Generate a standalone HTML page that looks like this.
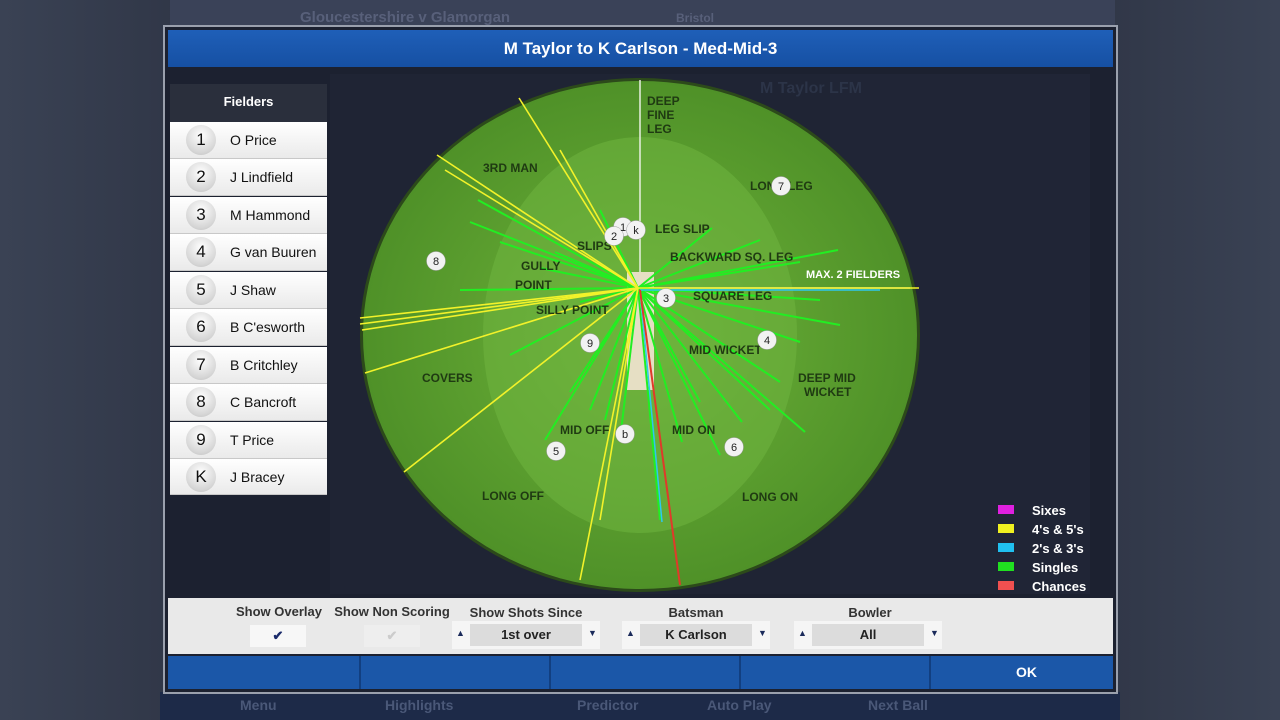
<!DOCTYPE html>
<html><head><meta charset="utf-8"><style>
*{margin:0;padding:0;box-sizing:border-box}
body{width:1280px;height:720px;overflow:hidden;background:linear-gradient(90deg,#3a4254,#2c3242 20%,#2c3242 80%,#3a4254);font-family:"Liberation Sans",sans-serif;position:relative}
.abs{position:absolute}
.topbar{left:170px;top:0;width:945px;height:28px;background:#3a4258}
.bottombar{left:160px;top:692px;width:960px;height:28px;background:#1d2a48;color:#4a5878;font-size:14px;font-weight:bold}
.modal{left:163px;top:25px;width:955px;height:669px;background:#1c2130;border:2px solid #9aa0ad}
.title{left:168px;top:30px;width:945px;height:37px;background:linear-gradient(#1f5fb8,#1650a3);color:#fff;font-size:17px;font-weight:bold;text-align:center;line-height:37px}
.fhead{left:170px;top:84px;width:157px;height:38px;background:#2a2f3c;color:#fff;font-size:13px;font-weight:bold;text-align:center;line-height:36px}
.row{left:170px;width:157px;height:37px;background:linear-gradient(#fff,#eaeaea);border-bottom:1px solid #c8c8c8;font-size:14px;color:#111}
.row .b{position:absolute;left:16px;top:3px;width:30px;height:30px;border-radius:50%;background:radial-gradient(circle at 50% 35%,#fff,#d5d5d5 70%,#bbb);text-align:center;line-height:29px;font-size:17px}
.row .n{position:absolute;left:60px;top:10px}
.ctrl{left:168px;top:598px;width:945px;height:56px;background:#e9e9e9}
.lbl{font-size:13px;font-weight:bold;color:#333;text-align:center}
.box{background:#dcdcdc;height:22px;text-align:center;line-height:22px;font-size:13px;font-weight:bold;color:#222}
.btns{left:168px;top:656px;width:945px;height:33px;background:#1b57a8}
.leg{font-size:13px;font-weight:bold;color:#fff}
</style></head><body>
<div class="abs topbar"></div>
<div class="abs" style="left:300px;top:9px;color:#58607a;font-size:15px;font-weight:bold">Gloucestershire v Glamorgan</div>
<div class="abs" style="left:676px;top:11px;color:#58607a;font-size:12px;font-weight:bold">Bristol</div>
<div class="abs bottombar"><span class="abs" style="left:80px;top:5px">Menu</span><span class="abs" style="left:225px;top:5px">Highlights</span><span class="abs" style="left:417px;top:5px">Predictor</span><span class="abs" style="left:547px;top:5px">Auto Play</span><span class="abs" style="left:708px;top:5px">Next Ball</span></div>
<div class="abs modal"></div>
<div class="abs" style="left:330px;top:74px;width:560px;height:520px;background:#1f2434"></div>
<div class="abs" style="left:830px;top:74px;width:260px;height:520px;background:#202536"></div>
<div class="abs title">M Taylor to K Carlson - Med-Mid-3</div>
<div class="abs" style="left:760px;top:80px;color:#2c3448;font-size:16px;font-weight:bold">M Taylor LFM</div>
<svg class="abs" style="left:0;top:0" width="1280" height="720">
<defs><radialGradient id="g" cx="50%" cy="50%" r="50%"><stop offset="0" stop-color="#6fb43a"/><stop offset="1" stop-color="#4f9128"/></radialGradient></defs>
<ellipse cx="640" cy="335" rx="280" ry="257" fill="#2c4a1a"/>
<ellipse cx="640" cy="335" rx="277" ry="254" fill="url(#g)"/>
<ellipse cx="640" cy="335" rx="157" ry="198" fill="#6fb440" opacity="0.55"/>
<line x1="640" y1="80" x2="640" y2="288" stroke="#e8f0e0" stroke-width="1.5"/>
<line x1="640" y1="288" x2="910" y2="288" stroke="#e8f0e0" stroke-width="1.5"/>
<rect x="627" y="272" width="27" height="118" fill="#e6dfc4"/>
<g stroke="#22ee22" stroke-width="2">
<line x1="638" y1="288" x2="478" y2="200"/><line x1="638" y1="288" x2="470" y2="222"/><line x1="638" y1="288" x2="500" y2="242"/><line x1="638" y1="288" x2="555" y2="252"/><line x1="638" y1="288" x2="540" y2="268"/><line x1="638" y1="288" x2="460" y2="290"/><line x1="638" y1="288" x2="580" y2="302"/><line x1="638" y1="288" x2="600" y2="210"/>
<line x1="638" y1="288" x2="838" y2="250"/><line x1="638" y1="288" x2="800" y2="262"/><line x1="638" y1="288" x2="760" y2="240"/><line x1="638" y1="288" x2="712" y2="228"/><line x1="638" y1="288" x2="820" y2="300"/><line x1="638" y1="288" x2="840" y2="325"/><line x1="638" y1="288" x2="800" y2="342"/><line x1="638" y1="288" x2="780" y2="382"/><line x1="638" y1="288" x2="805" y2="432"/><line x1="638" y1="288" x2="770" y2="410"/><line x1="638" y1="288" x2="742" y2="422"/><line x1="638" y1="288" x2="700" y2="402"/><line x1="638" y1="288" x2="720" y2="455"/><line x1="638" y1="288" x2="682" y2="442"/><line x1="638" y1="288" x2="660" y2="520"/><line x1="638" y1="288" x2="620" y2="440"/><line x1="638" y1="288" x2="605" y2="420"/><line x1="638" y1="288" x2="590" y2="410"/><line x1="638" y1="288" x2="570" y2="392"/><line x1="638" y1="288" x2="545" y2="440"/><line x1="638" y1="288" x2="510" y2="355"/>
</g>
<g stroke="#f2f22a" stroke-width="1.6">
<line x1="638" y1="288" x2="519" y2="98"/><line x1="638" y1="288" x2="437" y2="155"/><line x1="638" y1="288" x2="445" y2="170"/><line x1="638" y1="288" x2="360" y2="318"/><line x1="638" y1="288" x2="360" y2="324"/><line x1="638" y1="288" x2="362" y2="330"/><line x1="638" y1="288" x2="365" y2="373"/><line x1="638" y1="288" x2="404" y2="472"/><line x1="638" y1="288" x2="580" y2="580"/><line x1="638" y1="288" x2="600" y2="520"/><line x1="638" y1="288" x2="560" y2="150"/><line x1="638" y1="288" x2="919" y2="288"/>
</g>
<line x1="640" y1="290" x2="880" y2="290" stroke="#2ec8f0" stroke-width="1.5"/>
<line x1="640" y1="290" x2="662" y2="522" stroke="#2ec8f0" stroke-width="1.5"/>
<line x1="640" y1="290" x2="680" y2="585" stroke="#e03a2a" stroke-width="2"/>
<g font-family="Liberation Sans" font-size="12" font-weight="bold" fill="#1f3a12">
<text x="647" y="105">DEEP</text><text x="647" y="119">FINE</text><text x="647" y="133">LEG</text>
<text x="483" y="172">3RD MAN</text><text x="750" y="190">LONG LEG</text>
<text x="655" y="233">LEG SLIP</text><text x="577" y="250">SLIPS</text><text x="670" y="261">BACKWARD SQ. LEG</text>
<text x="521" y="270">GULLY</text><text x="515" y="289">POINT</text><text x="693" y="300">SQUARE LEG</text>
<text x="536" y="314">SILLY POINT</text><text x="689" y="354">MID WICKET</text>
<text x="422" y="382">COVERS</text><text x="798" y="382">DEEP MID</text><text x="804" y="396">WICKET</text>
<text x="560" y="434">MID OFF</text><text x="672" y="434">MID ON</text>
<text x="482" y="500">LONG OFF</text><text x="742" y="501">LONG ON</text>
</g>
<text x="806" y="278" font-family="Liberation Sans" font-size="11" font-weight="bold" fill="#fff">MAX. 2 FIELDERS</text>
<g font-family="Liberation Sans" font-size="11" fill="#222" text-anchor="middle">
<g fill="#f2f2f2" stroke="#999" stroke-width="0.5"><circle cx="623" cy="227" r="9.5"/><circle cx="614" cy="236" r="9.5"/><circle cx="636" cy="230" r="9.5"/><circle cx="666" cy="298" r="9.5"/><circle cx="781" cy="186" r="9.5"/><circle cx="436" cy="261" r="9.5"/><circle cx="767" cy="340" r="9.5"/><circle cx="590" cy="343" r="9.5"/><circle cx="625" cy="434" r="9.5"/><circle cx="734" cy="447" r="9.5"/><circle cx="556" cy="451" r="9.5"/></g>
<text x="623" y="231">1</text><text x="614" y="240">2</text><text x="636" y="234">k</text><text x="666" y="302">3</text><text x="781" y="190">7</text><text x="436" y="265">8</text><text x="767" y="344">4</text><text x="590" y="347">9</text><text x="625" y="438">b</text><text x="734" y="451">6</text><text x="556" y="455">5</text>
</g>
</svg>
<div class="abs fhead">Fielders</div>
<div class="abs row" style="top:122px"><span class="b">1</span><span class="n">O Price</span></div>
<div class="abs row" style="top:159px"><span class="b">2</span><span class="n">J Lindfield</span></div>
<div class="abs row" style="top:197px"><span class="b">3</span><span class="n">M Hammond</span></div>
<div class="abs row" style="top:234px"><span class="b">4</span><span class="n">G van Buuren</span></div>
<div class="abs row" style="top:272px"><span class="b">5</span><span class="n">J Shaw</span></div>
<div class="abs row" style="top:309px"><span class="b">6</span><span class="n">B C'esworth</span></div>
<div class="abs row" style="top:347px"><span class="b">7</span><span class="n">B Critchley</span></div>
<div class="abs row" style="top:384px"><span class="b">8</span><span class="n">C Bancroft</span></div>
<div class="abs row" style="top:422px"><span class="b">9</span><span class="n">T Price</span></div>
<div class="abs row" style="top:459px;height:36px"><span class="b">K</span><span class="n">J Bracey</span></div>
<div class="abs" style="left:998px;top:505px;width:16px;height:9px;background:#e020e0"></div>
<div class="abs" style="left:998px;top:524px;width:16px;height:9px;background:#f0f020"></div>
<div class="abs" style="left:998px;top:543px;width:16px;height:9px;background:#20c0f0"></div>
<div class="abs" style="left:998px;top:562px;width:16px;height:9px;background:#20e020"></div>
<div class="abs" style="left:998px;top:581px;width:16px;height:9px;background:#f05050"></div>
<div class="abs leg" style="left:1032px;top:503px">Sixes</div>
<div class="abs leg" style="left:1032px;top:522px">4's &amp; 5's</div>
<div class="abs leg" style="left:1032px;top:541px">2's &amp; 3's</div>
<div class="abs leg" style="left:1032px;top:560px">Singles</div>
<div class="abs leg" style="left:1032px;top:579px">Chances</div>
<div class="abs ctrl"></div>
<div class="abs lbl" style="left:230px;top:604px;width:98px">Show Overlay</div>
<div class="abs lbl" style="left:332px;top:604px;width:120px">Show Non Scoring</div>
<div class="abs lbl" style="left:462px;top:605px;width:128px">Show Shots Since</div>
<div class="abs lbl" style="left:636px;top:605px;width:120px">Batsman</div>
<div class="abs lbl" style="left:810px;top:605px;width:120px">Bowler</div>
<div class="abs box" style="left:250px;top:625px;width:56px;background:#f7f7f7;color:#1a2a6a">✔</div>
<div class="abs box" style="left:364px;top:625px;width:56px;background:#eee;color:#ccc">✔</div>
<div class="abs" style="left:452px;top:621px;width:148px;height:28px;background:#f5f5f5"></div>
<div class="abs box" style="left:470px;top:624px;width:112px">1st over</div>
<div class="abs" style="left:622px;top:621px;width:148px;height:28px;background:#f5f5f5"></div>
<div class="abs box" style="left:640px;top:624px;width:112px">K Carlson</div>
<div class="abs" style="left:794px;top:621px;width:148px;height:28px;background:#f5f5f5"></div>
<div class="abs box" style="left:812px;top:624px;width:112px">All</div>
<div class="abs" style="left:456px;top:628px;font-size:9px;color:#1a2a5a">▲</div><div class="abs" style="left:588px;top:628px;font-size:9px;color:#1a2a5a">▼</div>
<div class="abs" style="left:626px;top:628px;font-size:9px;color:#1a2a5a">▲</div><div class="abs" style="left:758px;top:628px;font-size:9px;color:#1a2a5a">▼</div>
<div class="abs" style="left:798px;top:628px;font-size:9px;color:#1a2a5a">▲</div><div class="abs" style="left:930px;top:628px;font-size:9px;color:#1a2a5a">▼</div>
<div class="abs btns"></div>
<div class="abs" style="left:359px;top:656px;width:2px;height:33px;background:#123f80"></div>
<div class="abs" style="left:549px;top:656px;width:2px;height:33px;background:#123f80"></div>
<div class="abs" style="left:739px;top:656px;width:2px;height:33px;background:#123f80"></div>
<div class="abs" style="left:929px;top:656px;width:2px;height:33px;background:#123f80"></div>
<div class="abs" style="left:1016px;top:664px;color:#fff;font-size:14px;font-weight:bold">OK</div>
</body></html>
